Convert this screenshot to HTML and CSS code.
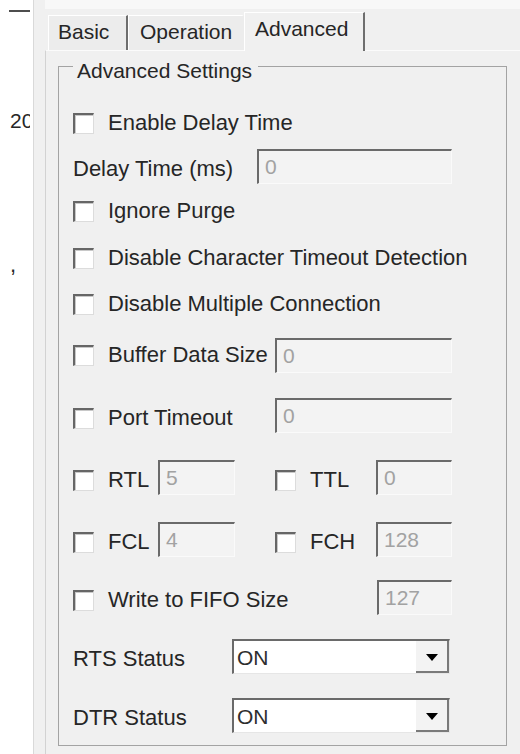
FILE: index.html
```html
<!DOCTYPE html>
<html lang="en">
<head>
<meta charset="utf-8">
<title>Advanced Settings</title>
<link rel="stylesheet" href="styles.css">
</head>
<body>
<div class="screen">
  <div class="side">
    <div class="side-dash"></div>
    <div class="side-num">20</div>
    <div class="side-comma">,</div>
  </div>
  <div class="gutter"></div>
  <div class="dialog">
    <div class="tabstrip">
      <div class="tab tab-basic">Basic</div>
      <div class="tab tab-operation">Operation</div>
      <div class="tab tab-active">Advanced</div>
    </div>
    <div class="panel">
      <fieldset class="group">
        <legend class="group-title">Advanced Settings</legend>
        <div class="rows">
          <div class="row"><span class="cb"></span><span class="txt">Enable Delay Time</span></div>
          <div class="row row-field"><span class="txt">Delay Time (ms)</span><span class="field w-delay">0</span></div>
          <div class="row"><span class="cb"></span><span class="txt">Ignore Purge</span></div>
          <div class="row"><span class="cb"></span><span class="txt">Disable Character Timeout Detection</span></div>
          <div class="row"><span class="cb"></span><span class="txt">Disable Multiple Connection</span></div>
          <div class="row"><span class="cb"></span><span class="txt">Buffer Data Size</span><span class="field w-wide">0</span></div>
          <div class="row row-field"><span class="cb"></span><span class="txt">Port Timeout</span><span class="field w-wide">0</span></div>
          <div class="row row-field">
            <div class="half"><span class="cb"></span><span class="txt lbl-l">RTL</span><span class="field w-left">5</span></div>
            <div class="half half-r"><span class="cb"></span><span class="txt lbl-r">TTL</span><span class="field w-right">0</span></div>
          </div>
          <div class="row row-field">
            <div class="half"><span class="cb"></span><span class="txt lbl-l">FCL</span><span class="field w-left">4</span></div>
            <div class="half half-r"><span class="cb"></span><span class="txt lbl-r">FCH</span><span class="field w-right">128</span></div>
          </div>
          <div class="row row-field"><span class="cb"></span><span class="txt">Write to FIFO Size</span><span class="field w-fifo">127</span></div>
          <div class="row row-field"><span class="txt lbl-combo">RTS Status</span>
            <div class="combo"><span class="combo-text">ON</span><span class="combo-btn"><svg width="12" height="7" viewBox="0 0 12 7"><polygon points="0,0 12,0 6,7" fill="#000"/></svg></span></div>
          </div>
          <div class="row row-field"><span class="txt lbl-combo">DTR Status</span>
            <div class="combo"><span class="combo-text">ON</span><span class="combo-btn"><svg width="12" height="7" viewBox="0 0 12 7"><polygon points="0,0 12,0 6,7" fill="#000"/></svg></span></div>
          </div>
        </div>
      </fieldset>
    </div>
  </div>
</div>
</body>
</html>
```
FILE: styles.css
```css
* { box-sizing: border-box; }
html, body { margin: 0; padding: 0; }
body {
  width: 520px;
  height: 754px;
  overflow: hidden;
  background: #fff;
  font-family: "Liberation Sans", Arial, sans-serif;
  font-size: 22px;
  line-height: 22px;
  color: #262626;
}
.screen { display: flex; height: 754px; }

.side { width: 33px; flex: none; background: #fff; display: flex; flex-direction: column; }
.side-dash { width: 21px; height: 2px; background: #4d4d4d; margin: 10px 0 0 9px; }
.side-num { width: 20px; margin: 98px 0 0 10px; overflow: hidden; white-space: nowrap; font-size: 21px; }
.side-comma { margin: 122px 0 0 10px; }

.gutter { width: 12px; flex: none; background: #f0f0f0; border-left: 1px solid #d9d9d9; }

.dialog { flex: 1; min-width: 0; display: flex; flex-direction: column; background: #f0f0f0; }

.tabstrip {
  height: 50px;
  flex: none;
  display: flex;
  align-items: flex-end;
  padding-left: 3px;
  background: linear-gradient(#f8f8f8 0 9px, #f0f0f0 9px);
  font-size: 21px;
}
.tab {
  height: 35px;
  padding: 5px 0 0 10px;
  border-top: 1px solid #fff;
  border-left: 1px solid #fff;
  border-right: 2px solid #6e6e6e;
  background: #ececec;
  white-space: nowrap;
  flex: none;
}
.tab-basic { width: 80px; padding-left: 9px; }
.tab-operation { width: 116px; padding-left: 11px; border-right-color: transparent; }
.tab-active {
  width: 121px;
  height: 39px;
  margin-bottom: -1px;
  position: relative;
  z-index: 1;
  background: #f0f0f0;
}

.panel {
  flex: 1;
  border-top: 1px solid #fbfbfb;
  border-left: 1px solid #d2d2d2;
  padding: 0 0 0 12px;
}

.group {
  margin: 0;
  width: 449px;
  min-width: 0;
  padding: 19px 54px 4px 14px;
  border: 1px solid #a3a3a3;
}
.group-title { padding: 9px 6px 0 4px; margin: 0; font-size: 21px; }

.rows {
  display: grid;
  grid-template-columns: minmax(0, 1fr);
  grid-template-rows: 44px 42px 48px 46px 46px 56px 64px 60px 64px 52px 66px 52px;
  align-items: center;
}
.row { display: flex; align-items: center; white-space: nowrap; min-width: 0; }
.half { display: flex; align-items: center; }
.half-r { margin-left: 40px; }

.cb {
  width: 21px;
  height: 21px;
  flex: none;
  background: #fff;
  border-top: 2px solid #666;
  border-left: 2px solid #666;
  border-right: 1px solid #dcdcdc;
  border-bottom: 1px solid #dcdcdc;
  box-shadow: inset 1px 1px 0 #c8c8c8;
  margin-right: 14px;
}
.row-field .cb, .row-field .txt { margin-top: 6px; }

.lbl-l { width: 50px; flex: none; }
.lbl-r { width: 66px; flex: none; }
.lbl-combo { width: 159px; flex: none; }

.field {
  height: 35px;
  flex: none;
  margin-left: auto;
  background: #f3f3f3;
  border-top: 2px solid #6a6a6a;
  border-left: 2px solid #6a6a6a;
  border-right: 1px solid #fafafa;
  border-bottom: 1px solid #fafafa;
  color: #a2a2a2;
  font-size: 21px;
  padding: 5px 0 0 6px;
}
.w-delay { width: 195px; }
.w-wide { width: 177px; }
.w-left { width: 77px; }
.w-right { width: 76px; }
.w-fifo { width: 75px; }

.combo {
  width: 218px;
  height: 35px;
  flex: none;
  display: flex;
  background: #fff;
  border-top: 2px solid #6a6a6a;
  border-left: 2px solid #6a6a6a;
  border-right: 1px solid #e6e6e6;
  border-bottom: 1px solid #e6e6e6;
}
.combo-text { flex: 1; padding: 6px 0 0 3px; color: #2e2e2e; font-size: 21px; }
.combo-btn {
  width: 33px;
  flex: none;
  display: flex;
  align-items: center;
  justify-content: center;
  padding-top: 4px;
  background: #f3f3f3;
  border-right: 2px solid #7a7a7a;
  border-bottom: 2px solid #7a7a7a;
}
.combo-btn svg { display: block; }
```
